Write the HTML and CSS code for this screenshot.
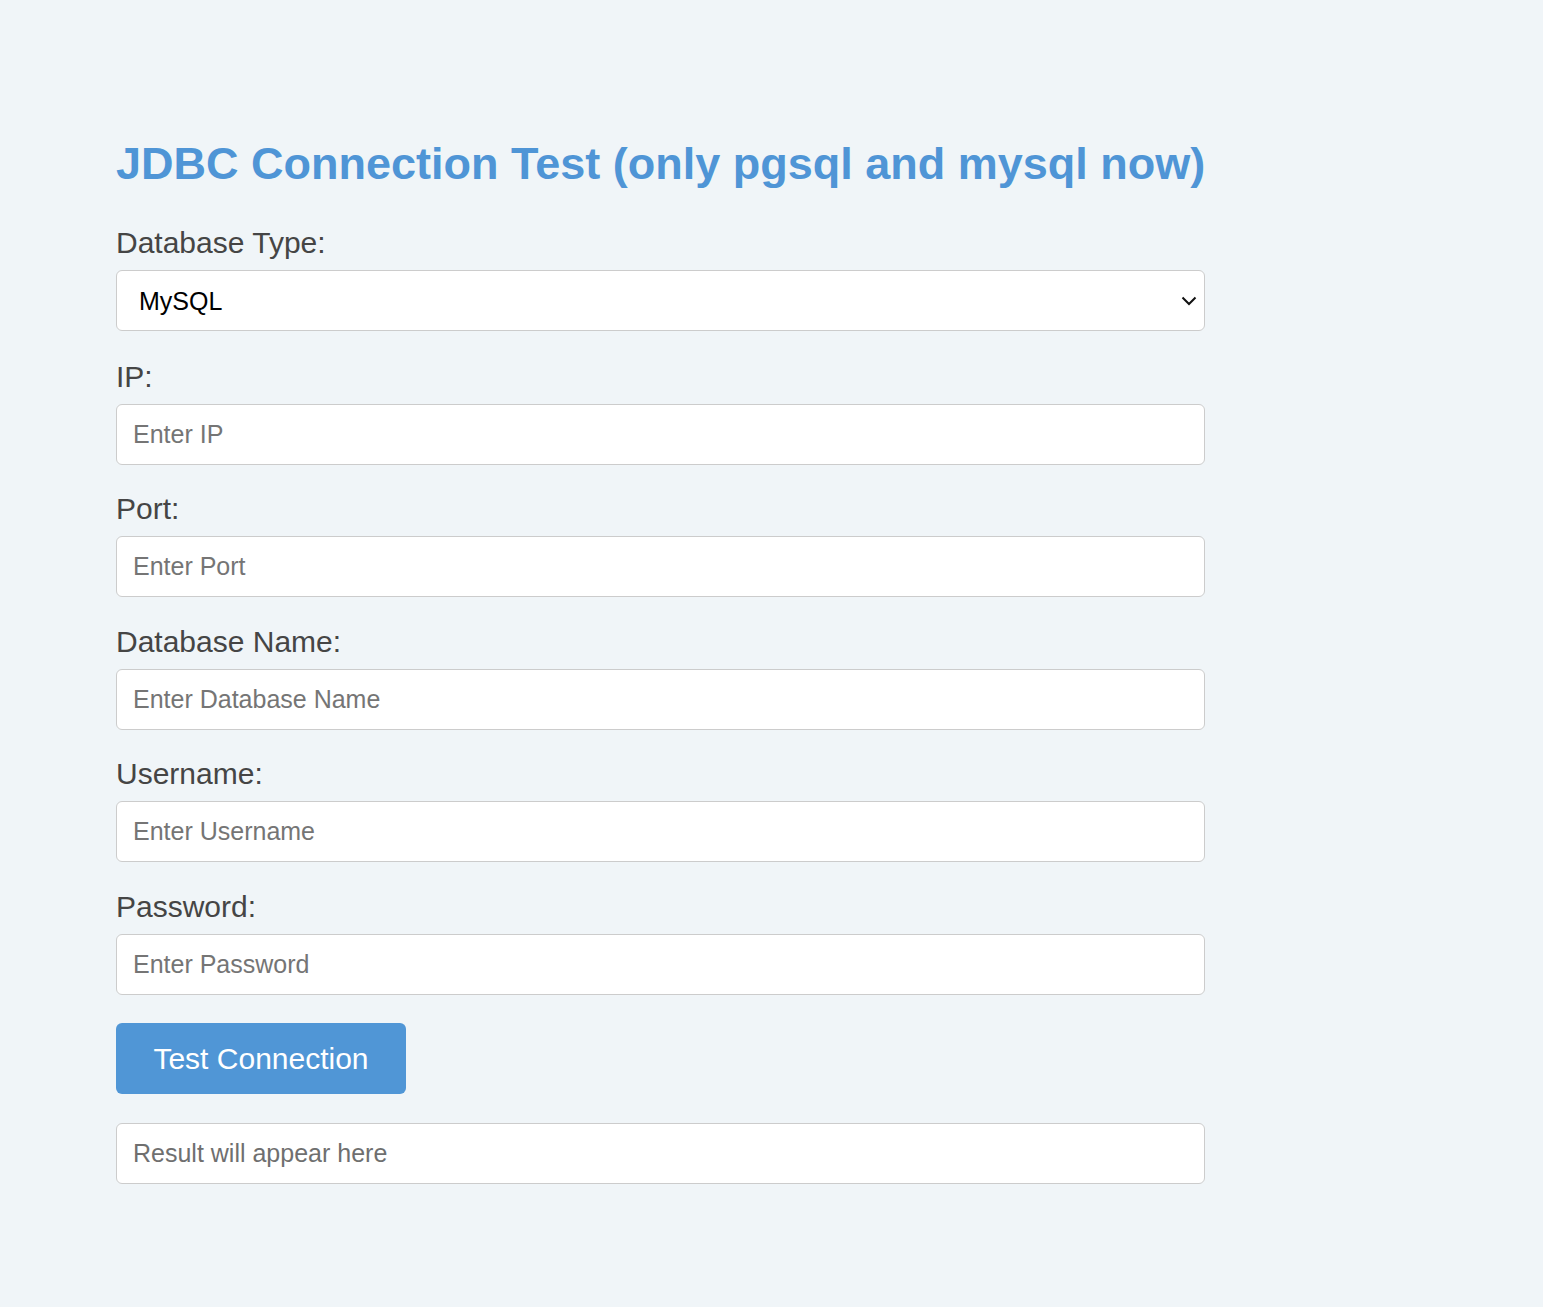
FILE: index.html
```html
<!DOCTYPE html>
<html lang="en">
<head>
<meta charset="utf-8">
<title>JDBC Connection Test</title>
<link rel="stylesheet" href="styles.css">
</head>
<body>
<main class="container">
  <h1 class="title">JDBC Connection Test (only pgsql and mysql now)</h1>
  <form class="form">
    <div class="field field-select">
      <label class="label" for="dbtype">Database Type:</label>
      <div class="select-wrap">
        <select id="dbtype" class="select">
          <option>MySQL</option>
          <option>PostgreSQL</option>
        </select>
        <svg class="chevron" width="16" height="10" viewBox="0 0 16 10"><path d="M1.5 1.5 L8 8 L14.5 1.5" fill="none" stroke="#111" stroke-width="2"/></svg>
      </div>
    </div>
    <div class="field">
      <label class="label" for="ip">IP:</label>
      <input id="ip" class="input" placeholder="Enter IP">
    </div>
    <div class="field">
      <label class="label" for="port">Port:</label>
      <input id="port" class="input" placeholder="Enter Port">
    </div>
    <div class="field">
      <label class="label" for="dbname">Database Name:</label>
      <input id="dbname" class="input" placeholder="Enter Database Name">
    </div>
    <div class="field">
      <label class="label" for="user">Username:</label>
      <input id="user" class="input" placeholder="Enter Username">
    </div>
    <div class="field">
      <label class="label" for="pass">Password:</label>
      <input id="pass" class="input" type="password" placeholder="Enter Password">
    </div>
    <button type="button" class="button">Test Connection</button>
    <div class="result">Result will appear here</div>
  </form>
</main>
</body>
</html>
```

FILE: styles.css
```css
html, body {
  margin: 0;
  padding: 0;
  background: #f0f5f8;
  font-family: "Liberation Sans", Arial, sans-serif;
}
.container {
  width: 1089px;
  margin-left: 116px;
  padding-top: 138px;
}
.title {
  margin: 0 0 36px 0;
  font-size: 45px;
  font-weight: bold;
  line-height: 51px;
  color: #4f95d6;
  white-space: nowrap;
}
.form {
  display: flex;
  flex-direction: column;
}
.field {
  display: flex;
  flex-direction: column;
  gap: 10px;
  margin-bottom: 26.5px;
}
.field-select {
  margin-bottom: 27.5px;
}
.label {
  font-size: 30px;
  line-height: 35px;
  color: #454545;
}
.input, .select, .result {
  box-sizing: border-box;
  width: 100%;
  height: 61px;
  border: 1px solid #cccccc;
  border-radius: 6px;
  background: #ffffff;
  font-family: "Liberation Sans", Arial, sans-serif;
  font-size: 25px;
  padding: 0 16px;
  outline: none;
  margin: 0;
}
.input::placeholder {
  color: #757575;
  opacity: 1;
}
.select-wrap {
  position: relative;
}
.select {
  appearance: none;
  -webkit-appearance: none;
  color: #000;
  padding-left: 22px;
}
.chevron {
  position: absolute;
  right: 8px;
  top: 26px;
  pointer-events: none;
}
.button {
  align-self: flex-start;
  width: 290px;
  height: 71px;
  border: none;
  border-radius: 6px;
  background: #5096d6;
  color: #ffffff;
  font-family: "Liberation Sans", Arial, sans-serif;
  font-size: 30px;
  padding: 0;
  margin: 2px 0 29px 0;
}
.result {
  display: flex;
  align-items: center;
  color: #6f6f6f;
}
```
